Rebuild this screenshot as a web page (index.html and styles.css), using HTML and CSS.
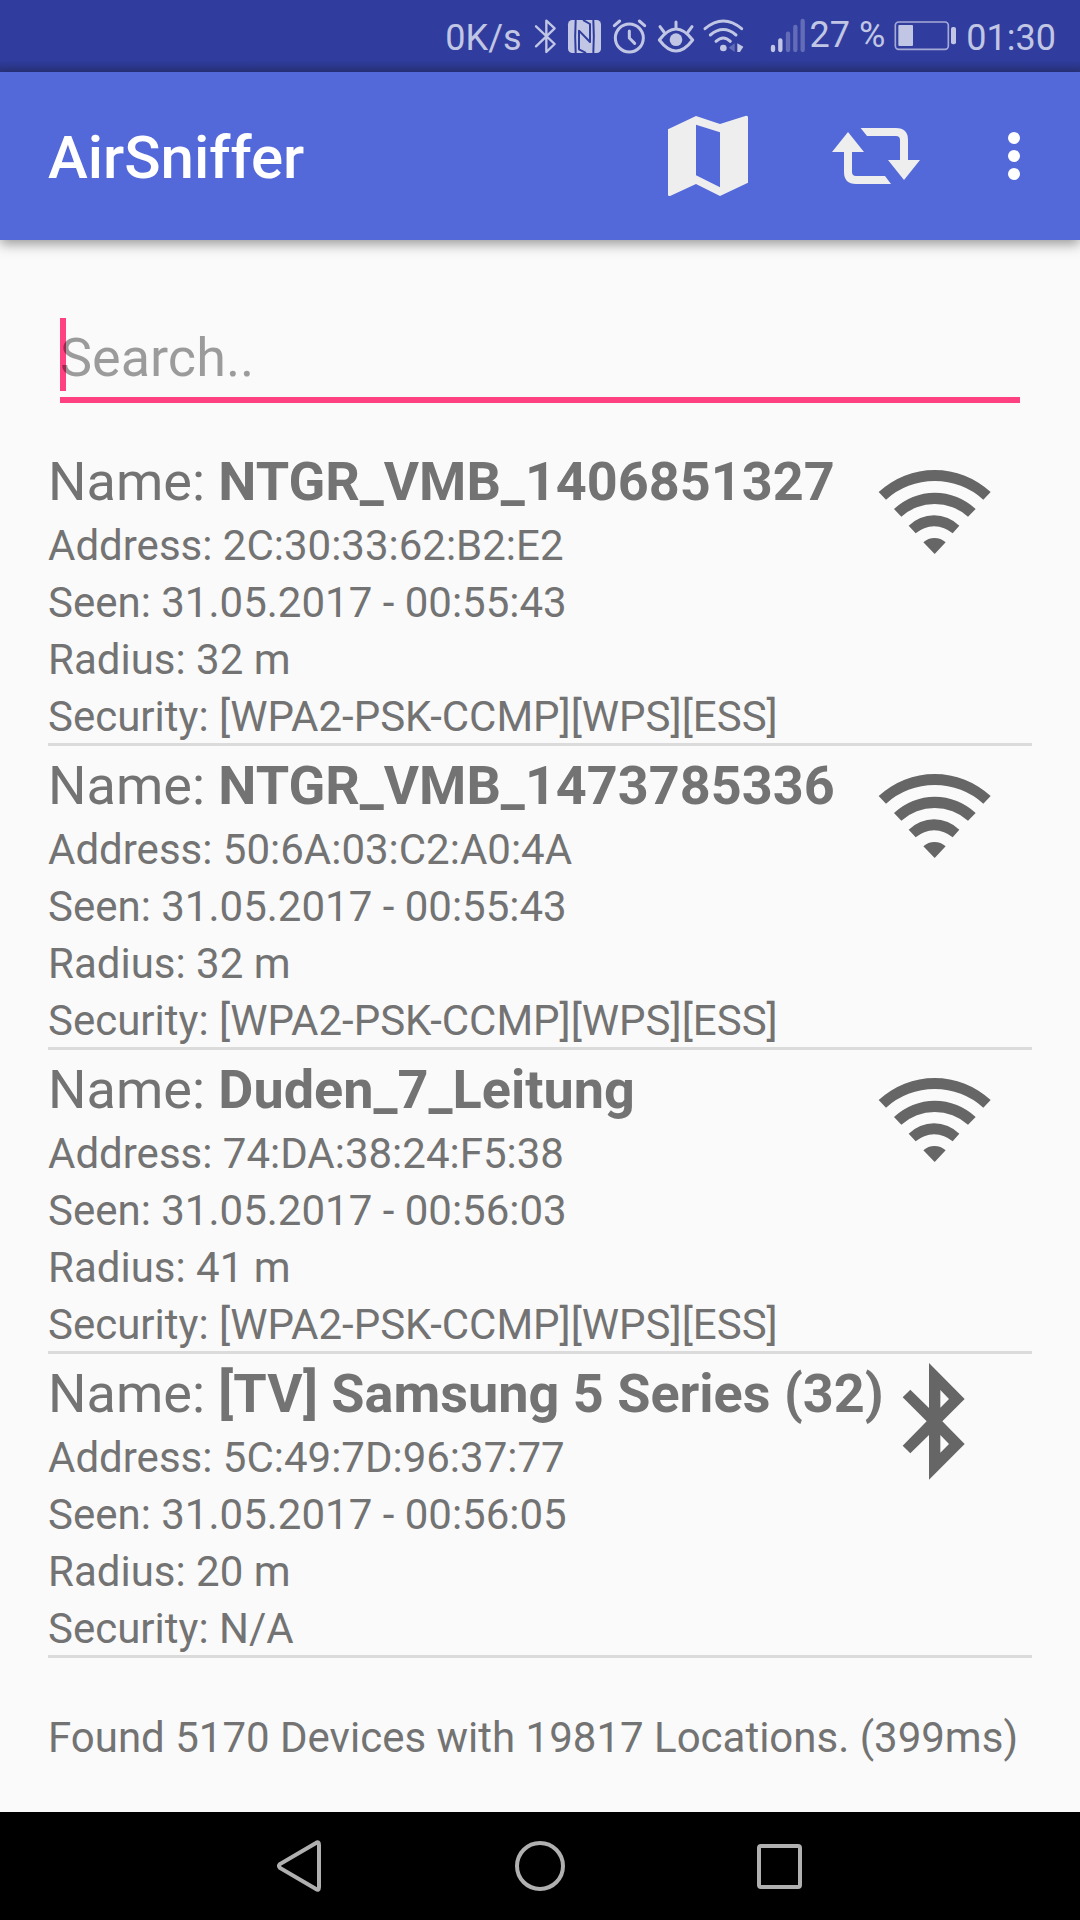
FILE: index.html
```html
<!DOCTYPE html>
<html lang="en">
<head>
<meta charset="utf-8">
<meta name="viewport" content="width=device-width, initial-scale=1">
<title>AirSniffer</title>
<link rel="stylesheet" href="styles.css">
</head>
<body>
<svg class="symbols" aria-hidden="true">
  <symbol id="wifi" viewBox="108 186 354 360">
    <path d="M116 336A247 247 0 0 1 452 336L430 359A218 218 0 0 0 138 359ZM162 387A178 178 0 0 1 407 387L384 410A150 150 0 0 0 184 410ZM206 437A108 108 0 0 1 358 437L338 460A84 84 0 0 0 227 460ZM250 487A50 50 0 0 1 317 487L284 522Z"/>
  </symbol>
  <symbol id="bluetooth" viewBox="180 42 198 384">
    <path fill-rule="evenodd" d="M267 69L374 177L307 244L374 312L267 419V285L211 340L188 317L260 244L188 172L211 149L267 204ZM301 150V203L327 177ZM301 285V338L327 312Z"/>
  </symbol>
</svg>

<div class="status-bar">
  <span>0K/s</span>
  <svg class="st-bt" viewBox="300 0 96 216"><path d="M318 79L374 132L349 156V62L374 85L318 139"/></svg>
  <svg class="st-nfc" viewBox="396 0 132 216"><rect x="414" y="60" width="99" height="99" rx="13"/><path class="cut" d="M437 62Q434 110 437 157M490 62Q493 110 490 157M466 158L447 148V92L480 126V72L461 61"/></svg>
  <svg class="st-alarm" viewBox="528 0 138 216"><circle cx="598" cy="114" r="42"/><path d="M598 93V114L614 130M553 77L569 63M644 77L628 63"/></svg>
  <svg class="st-eye" viewBox="666 0 141 216"><path d="M688 120Q738 54 788 120Q738 186 688 120ZM738 86V66M702 96L690 80M774 96L786 80"/><circle cx="738" cy="119" r="19"/></svg>
  <svg class="st-wifi" viewBox="807 0 141 216"><path d="M825 86Q880 40 935 86M841 105Q880 72 918 105M858 124Q880 104 901 124"/><circle cx="880" cy="144" r="10"/><path class="dim" d="M914 130V156L896 143Z"/><path class="mark" d="M922 130L940 140L930 156H922Z"/></svg>
  <svg class="st-signal" viewBox="54 0 120 216"><path d="M69 141V150M91 121V150"/><path class="dim" d="M114 101V150M136 81V150M158 63V150"/></svg>
  <span class="percent">27 %</span>
  <svg class="st-battery" viewBox="432 0 198 216"><rect class="case" x="439" y="66" width="159" height="82" rx="10"/><rect x="448" y="75" width="44" height="63" rx="3"/><rect x="606" y="81" width="15" height="52" rx="6"/></svg>
  <time>01:30</time>
</div>

<header class="app-bar">
  <h1>AirSniffer</h1>
  <button type="button" aria-label="Map"><svg viewBox="60 54 288 288"><path fill-rule="evenodd" d="M84 118L168 78L240 102L316 78Q324 76 324 82V278L240 318L168 282L92 317Q84 320 84 314ZM168 104V256L240 292V127Z"/></svg></button>
  <button type="button" aria-label="Refresh"><svg viewBox="564 54 288 288"><path d="M624 126L672 186H636V246Q636 258 648 258H735L753 282H648Q612 282 612 246V186H576ZM662 114H768Q804 114 804 150V210H840L792 270L744 210H780V150Q780 138 768 138H681Z"/></svg></button>
  <button type="button" aria-label="More options" class="more"><svg viewBox="1068 54 108 288"><circle cx="1122" cy="144" r="18"/><circle cx="1122" cy="198" r="18"/><circle cx="1122" cy="252" r="18"/></svg></button>
</header>

<main>
  <div class="search">
    <span class="caret"></span>
    <input type="text" aria-label="Search" placeholder="Search..">
  </div>

  <ul class="devices">
    <li>
      <div class="info">
        <h2>Name: <b>NTGR_VMB_1406851327</b></h2>
        <p>Address: 2C:30:33:62:B2:E2</p>
        <p>Seen: 31.05.2017 - 00:55:43</p>
        <p>Radius: 32 m</p>
        <p>Security: [WPA2-PSK-CCMP][WPS][ESS]</p>
      </div>
      <svg class="wifi"><use href="#wifi"/></svg>
    </li>
    <li>
      <div class="info">
        <h2>Name: <b>NTGR_VMB_1473785336</b></h2>
        <p>Address: 50:6A:03:C2:A0:4A</p>
        <p>Seen: 31.05.2017 - 00:55:43</p>
        <p>Radius: 32 m</p>
        <p>Security: [WPA2-PSK-CCMP][WPS][ESS]</p>
      </div>
      <svg class="wifi"><use href="#wifi"/></svg>
    </li>
    <li>
      <div class="info">
        <h2>Name: <b>Duden_7_Leitung</b></h2>
        <p>Address: 74:DA:38:24:F5:38</p>
        <p>Seen: 31.05.2017 - 00:56:03</p>
        <p>Radius: 41 m</p>
        <p>Security: [WPA2-PSK-CCMP][WPS][ESS]</p>
      </div>
      <svg class="wifi"><use href="#wifi"/></svg>
    </li>
    <li>
      <div class="info">
        <h2>Name: <b>[TV] Samsung 5 Series (32)</b></h2>
        <p>Address: 5C:49:7D:96:37:77</p>
        <p>Seen: 31.05.2017 - 00:56:05</p>
        <p>Radius: 20 m</p>
        <p>Security: N/A</p>
      </div>
      <svg class="bluetooth"><use href="#bluetooth"/></svg>
    </li>
  </ul>

  <p class="summary">Found 5170 Devices with 19817 Locations. (399ms)</p>
</main>

<nav class="nav-bar">
  <button type="button" aria-label="Back"><svg viewBox="0 0 60 60"><path d="M46 7Q49 5 49 9V51Q49 55 46 53L10 32Q8 30 10 28Z"/></svg></button>
  <button type="button" aria-label="Home"><svg viewBox="0 0 60 60"><circle cx="30" cy="30" r="23"/></svg></button>
  <button type="button" aria-label="Recent apps"><svg viewBox="0 0 60 60"><rect x="9" y="10" width="41" height="41" rx="2"/></svg></button>
</nav>
</body>
</html>
```
FILE: styles.css
```css
* {
  box-sizing: border-box;
  margin: 0;
  padding: 0;
}

body {
  display: flex;
  flex-direction: column;
  min-height: 100vh;
  background: #fafafa;
  color: #737373;
  font-family: Roboto, "Liberation Sans", sans-serif;
  font-size: 42px;
  line-height: 57px;
}

svg {
  display: block;
  flex: none;
}

button {
  display: flex;
  align-items: center;
  justify-content: center;
  border: 0;
  background: none;
}

.symbols {
  position: absolute;
  width: 0;
  height: 0;
}

/* Status bar */

.status-bar {
  display: flex;
  align-items: center;
  justify-content: flex-end;
  height: 72px;
  padding-right: 24px;
  background: linear-gradient(#303d9e 60px, #29347f);
  color: #c1c6e4;
  font-size: 36px;
  line-height: 68px;
  white-space: nowrap;
}

.status-bar svg {
  height: 72px;
  fill: #c1c6e4;
  stroke: none;
  stroke-linecap: round;
  stroke-linejoin: round;
}

.status-bar span,
.status-bar time {
  padding-top: 4px;
}

.status-bar .percent {
  padding: 0 8px 2px 2px;
}

.status-bar .dim {
  opacity: 0.35;
}

.status-bar .st-bt {
  width: 32px;
  margin-left: 8px;
  fill: none;
  stroke: #c1c6e4;
  stroke-width: 7;
}

.st-nfc {
  width: 44px;
}

.st-nfc .cut {
  fill: none;
  stroke: #303d9e;
  stroke-width: 6;
}

.status-bar .st-alarm {
  width: 46px;
  fill: none;
  stroke: #c1c6e4;
  stroke-width: 9;
}

.st-eye {
  width: 47px;
}

.st-eye path {
  fill: none;
  stroke: #c1c6e4;
  stroke-width: 9;
}

.st-wifi {
  width: 47px;
}

.st-wifi path:first-child {
  fill: none;
  stroke: #c1c6e4;
  stroke-width: 9;
}

.st-signal {
  width: 40px;
  margin-left: 22px;
}

.st-signal path {
  fill: none;
  stroke: #c1c6e4;
  stroke-width: 13;
}

.st-battery {
  width: 66px;
  margin-right: 7px;
}

.st-battery .case {
  fill: none;
  stroke: #a5abd6;
  stroke-width: 5;
}

/* App bar */

.app-bar {
  display: flex;
  align-items: center;
  gap: 72px;
  height: 168px;
  padding: 0 48px;
  background: #5469d9;
  box-shadow: 0 4px 12px rgba(0, 0, 0, 0.4);
  color: #fff;
}

.app-bar h1 {
  flex: 1;
  padding-top: 4px;
  font-size: 60px;
  font-weight: 500;
  line-height: 72px;
}

.app-bar svg {
  width: 96px;
  height: 96px;
  fill: #eee;
}

.app-bar .more svg {
  width: 36px;
  fill: #fff;
}

/* Content */

main {
  flex: 1;
  padding: 78px 48px 0;
}

.search {
  position: relative;
  margin: 0 12px 39px;
  border-bottom: 6px solid #ff4081;
}

.search input {
  position: relative;
  display: block;
  width: 100%;
  height: 79px;
  padding-bottom: 1px;
  border: 0;
  outline: 0;
  background: transparent;
  color: #212121;
  font: inherit;
  font-size: 54px;
}

.search input::placeholder {
  color: rgba(0, 0, 0, 0.38);
  opacity: 1;
}

.caret {
  position: absolute;
  top: 0;
  left: 0;
  width: 6px;
  height: 73px;
  background: #ff4081;
}

.devices {
  list-style: none;
}

.devices li {
  display: flex;
  align-items: flex-start;
  border-bottom: 3px solid #dbdbdb;
}

.info {
  flex: 1;
  min-width: 0;
  padding-top: 5px;
  margin-bottom: -2px;
}

.info h2 {
  font-size: 54px;
  font-weight: 400;
  line-height: 70px;
}

.devices svg {
  fill: #666;
}

.devices .wifi {
  width: 118px;
  height: 120px;
  margin-right: 38px;
}

.devices .bluetooth {
  width: 66px;
  height: 128px;
  margin-right: 66px;
}

.summary {
  padding: 51px 0 40px;
}

/* Navigation bar */

.nav-bar {
  display: flex;
  justify-content: center;
  height: 108px;
  background: #000;
}

.nav-bar button {
  width: 240px;
}

.nav-bar svg {
  width: 60px;
  height: 60px;
  fill: none;
  stroke: #b0b0b0;
  stroke-width: 4;
}
```
